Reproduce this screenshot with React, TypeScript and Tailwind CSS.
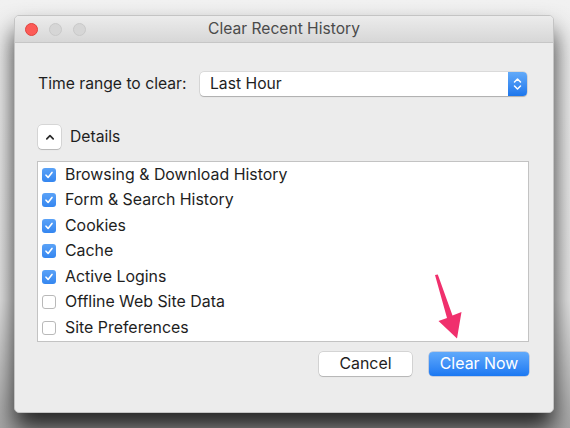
import { useState } from 'react';

const items = [
  { label: 'Browsing & Download History', checked: true },
  { label: 'Form & Search History', checked: true },
  { label: 'Cookies', checked: true },
  { label: 'Cache', checked: true },
  { label: 'Active Logins', checked: true },
  { label: 'Offline Web Site Data', checked: false },
  { label: 'Site Preferences', checked: false },
];

const Checkbox = ({ checked }: { checked: boolean }) =>
  checked ? (
    <span className="flex h-[14px] w-[14px] items-center justify-center rounded-[3px] bg-gradient-to-b from-[#5aa2f7] to-[#3486f0]">
      <svg width="10" height="10" viewBox="0 0 10 10">
        <path d="M2 5.2 L4.1 7.4 L8 2.4" fill="none" stroke="white" strokeWidth="1.6" strokeLinecap="round" strokeLinejoin="round" />
      </svg>
    </span>
  ) : (
    <span className="h-[14px] w-[14px] rounded-[3px] border border-[#b9b9b9] bg-white" />
  );

const App = () => {
  const [rows, setRows] = useState(items);

  return (
    <div className="relative h-[428px] w-[570px] overflow-hidden bg-gradient-to-b from-[#f1f1f1] via-[#e9e9e9] via-70% to-[#a9a9a9] px-[14px] pt-[15px] font-['Inter','Liberation_Sans',sans-serif] text-[#1e1e1e]">
      <div className="flex h-[398px] w-[540px] flex-col overflow-hidden rounded-[5px] border border-[#c4c4c4] bg-[#ececec] shadow-[0_16px_24px_rgba(0,0,0,0.8)]">
        {/* Title bar */}
        <div className="relative flex h-[27px] shrink-0 items-center justify-center border-b border-[#c6c6c6] bg-gradient-to-b from-[#ececec] to-[#d7d7d7]">
          <div className="absolute left-[10px] top-[7px] flex gap-[11px]">
            <span className="h-[13px] w-[13px] rounded-full border border-[#e0443e] bg-[#fc5b57]" />
            <span className="h-[13px] w-[13px] rounded-full border border-[#c9c9c9] bg-[#d6d6d6]" />
            <span className="h-[13px] w-[13px] rounded-full border border-[#c9c9c9] bg-[#d6d6d6]" />
          </div>
          <span className="text-[15.6px] text-[#4b4b4b]">Clear Recent History</span>
        </div>

        {/* Body */}
        <div className="flex flex-1 flex-col pl-[23px] pr-[24px] pt-[29px]">
          <div className="flex h-[24px] items-center">
            <span className="w-[162px] text-[15.7px]">Time range to clear:</span>
            <div className="flex h-[24px] w-[327px] items-stretch overflow-hidden rounded-[4px] bg-white shadow-[0_0_0_0.5px_rgba(0,0,0,0.15),0_1px_1px_rgba(0,0,0,0.2)]">
              <span className="flex flex-1 items-center pl-[10px] text-[15.7px]">Last Hour</span>
              <span className="flex w-[19px] items-center justify-center bg-gradient-to-b from-[#62aaf9] to-[#1b76ec]">
                <svg width="9" height="16" viewBox="0 0 9 16">
                  <path d="M1.5 6 L4.5 3 L7.5 6 M1.5 10 L4.5 13 L7.5 10" fill="none" stroke="white" strokeWidth="1.5" strokeLinecap="round" strokeLinejoin="round" />
                </svg>
              </span>
            </div>
          </div>

          <div className="mt-[29px] flex h-[24px] items-center">
            <span className="flex h-[24px] w-[23px] items-center justify-center rounded-[4px] bg-white shadow-[0_0_0_0.5px_rgba(0,0,0,0.18),0_1px_1px_rgba(0,0,0,0.15)]">
              <svg width="10" height="8" viewBox="0 0 10 8">
                <path d="M1.8 5.8 L5 2.6 L8.2 5.8" fill="none" stroke="#2a2a2a" strokeWidth="1.7" strokeLinecap="round" strokeLinejoin="round" />
              </svg>
            </span>
            <span className="ml-[9px] text-[15.7px]">Details</span>
          </div>

          <div className="-ml-px mt-[12px] flex h-[181px] flex-col border border-[#c3c3c3] bg-white">
            {rows.map((r, i) => (
              <div
                key={r.label}
                className="flex h-[25.5px] items-center gap-[9px] pl-[4px]"
                onClick={() => setRows(rows.map((x, j) => (j === i ? { ...x, checked: !x.checked } : x)))}
              >
                <Checkbox checked={r.checked} />
                <span className="text-[15.9px]">{r.label}</span>
              </div>
            ))}
          </div>

          <div className="mt-[10px] flex justify-end gap-[17px]">
            <button className="h-[24px] w-[93px] rounded-[4px] bg-white text-[15.9px] text-[#1e1e1e] shadow-[0_0_0_0.5px_rgba(0,0,0,0.2),0_1px_1px_rgba(0,0,0,0.15)]">
              Cancel
            </button>
            <button className="h-[24px] w-[100px] rounded-[4px] bg-gradient-to-b from-[#5fa9fb] to-[#1a78f2] text-[15.9px] text-white shadow-[0_0_0_0.5px_rgba(0,60,160,0.35)]">
              Clear Now
            </button>
          </div>
        </div>
      </div>

      {/* annotation arrow */}
      <svg className="pointer-events-none absolute left-0 top-0" width="570" height="428" viewBox="0 0 570 428">
        <polygon
          points="435,275 437.8,274.5 452.5,315.5 461.5,312 457,338.5 438.5,321 447,318"
          fill="#f0306d"
        />
      </svg>
    </div>
  );
};

export default App;
